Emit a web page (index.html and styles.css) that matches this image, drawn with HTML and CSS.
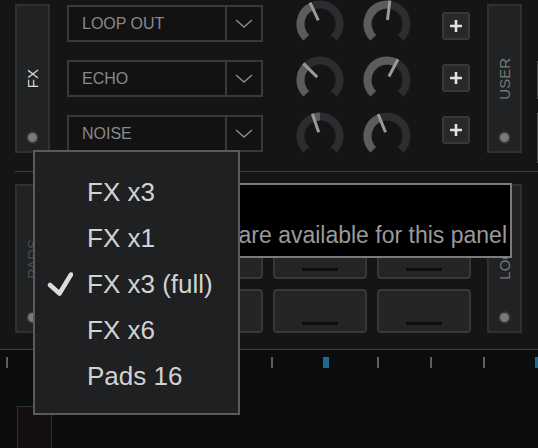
FILE: index.html
```html
<!DOCTYPE html>
<html lang="en">
<head>
    <meta charset="UTF-8">
    <meta name="viewport" content="width=device-width, initial-scale=1.0">
    <title>FX Bank</title>
    <link rel="stylesheet" href="styles.css">
</head>
<body>
    <section class="fx-bank">
        <div class="side active">
            <span class="side-label">FX</span>
            <span class="led"></span>
        </div>

        <div class="combos">
            <div class="combo">
                <span class="combo-text">LOOP OUT</span>
                <span class="combo-arrow"><svg width="18" height="9" viewBox="0 0 18 9"><path d="M1 1 L9 8 L17 1"/></svg></span>
            </div>
            <div class="combo">
                <span class="combo-text">ECHO</span>
                <span class="combo-arrow"><svg width="18" height="9" viewBox="0 0 18 9"><path d="M1 1 L9 8 L17 1"/></svg></span>
            </div>
            <div class="combo">
                <span class="combo-text">NOISE</span>
                <span class="combo-arrow"><svg width="18" height="9" viewBox="0 0 18 9"><path d="M1 1 L9 8 L17 1"/></svg></span>
            </div>
        </div>

        <div class="knobs first">
            <div class="knob" data-value="-25"></div>
            <div class="knob" data-value="-45"></div>
            <div class="knob" data-value="-19" data-origin="0"></div>
        </div>
        <div class="knobs second">
            <div class="knob" data-value="7"></div>
            <div class="knob" data-value="28"></div>
            <div class="knob" data-value="-22"></div>
        </div>

        <div class="adds">
            <button class="add"><svg width="14" height="14" viewBox="0 0 14 14"><path d="M7 1 V13 M1 7 H13"/></svg></button>
            <button class="add"><svg width="14" height="14" viewBox="0 0 14 14"><path d="M7 1 V13 M1 7 H13"/></svg></button>
            <button class="add"><svg width="14" height="14" viewBox="0 0 14 14"><path d="M7 1 V13 M1 7 H13"/></svg></button>
        </div>

        <div class="side user">
            <span class="side-label">USER</span>
            <span class="led"></span>
        </div>

        <div class="next">
            <div class="next-box"></div>
            <div class="next-box tall"></div>
        </div>
    </section>

    <section class="pad-bank">
        <div class="side dim">
            <span class="side-label">PADS</span>
            <span class="led"></span>
        </div>
        <div class="pads">
            <div class="pad"></div><div class="pad"></div><div class="pad"></div><div class="pad"></div>
            <div class="pad"></div><div class="pad"></div><div class="pad"></div><div class="pad"></div>
            <div class="pad"></div><div class="pad"></div><div class="pad"></div><div class="pad"></div>
        </div>
        <div class="side loop">
            <span class="side-label">LOOP</span>
            <span class="led"></span>
        </div>
    </section>

    <section class="timeline">
        <div class="ticks">
            <span class="tick"></span><span class="tick"></span><span class="tick cue"></span>
            <span class="tick"></span><span class="tick"></span><span class="tick"></span>
            <span class="tick cue"></span><span class="tick"></span><span class="tick"></span>
            <span class="tick"></span><span class="tick cue"></span>
        </div>
        <div class="clip"></div>
    </section>

    <div class="notice">No pads are available for this panel</div>

    <ul class="menu">
        <li><span class="menu-text">FX x3</span></li>
        <li><span class="menu-text">FX x1</span></li>
        <li>
            <span class="check"><svg width="26" height="24" viewBox="0 0 26 24"><path d="M3 13 L12.5 21.5 L24 2.5"/></svg></span>
            <span class="menu-text">FX x3 (full)</span>
        </li>
        <li><span class="menu-text">FX x6</span></li>
        <li><span class="menu-text">Pads 16</span></li>
    </ul>

    <script>
        function point(r, deg) {
            const a = deg * Math.PI / 180;
            return (24 + r * Math.sin(a)).toFixed(2) + " " + (24 - r * Math.cos(a)).toFixed(2);
        }

        function arc(from, to) {
            const large = to - from > 180 ? 1 : 0;
            return `M${point(19.5, from)} A19.5 19.5 0 ${large} 1 ${point(19.5, to)}`;
        }

        document.querySelectorAll(".knob").forEach(knob => {
            const value = Number(knob.dataset.value);
            const origin = knob.dataset.origin ? Number(knob.dataset.origin) : -135;
            knob.innerHTML = `<svg width="48" height="48" viewBox="0 0 48 48">
                <path class="knob-track" d="${arc(-135, 135)}"/>
                <path class="knob-fill" d="${arc(Math.min(origin, value), Math.max(origin, value))}"/>
                <path class="knob-needle" d="M${point(4, value)} L${point(23.5, value)}"/>
            </svg>`;
        });
    </script>
</body>
</html>
```

FILE: styles.css
```css
* {
    box-sizing: border-box;
}
body {
    margin: 0;
    width: 538px;
    height: 448px;
    overflow: hidden;
    position: relative;
    background-color: #151515;
    font-family: "Liberation Sans", Arial, sans-serif;
}

/* top bank */
.fx-bank {
    display: flex;
    align-items: flex-start;
    height: 172px;
    margin-left: 15px;
    border-bottom: 1px solid #404040;
}
.fx-bank > * {
    flex-shrink: 0;
}
.fx-bank .side {
    margin-top: 4px;
}

.side {
    display: grid;
    flex-shrink: 0;
    width: 35px;
    height: 149px;
    background-color: #212224;
    border: 2px solid #2f3032;
}
.side-label, .led {
    grid-area: 1 / 1;
    justify-self: center;
}
.side-label {
    align-self: center;
    writing-mode: vertical-rl;
    transform: rotate(180deg);
    font-size: 15px;
    color: #777;
}
.side.active .side-label {
    color: #dadada;
}
.side.dim .side-label {
    color: #4c4c4c;
}
.led {
    align-self: end;
    width: 9px;
    height: 9px;
    margin-bottom: 9px;
    border-radius: 50%;
    background-color: #7a7a7a;
    box-shadow: 0 0 0 2px #333437;
}
.side.user {
    margin-left: 17px;
}

.combos {
    display: flex;
    flex-direction: column;
    gap: 18px;
    margin-left: 17px;
    padding-top: 5px;
}
.combo {
    display: flex;
    width: 196px;
    height: 37px;
    border: 2px solid #393939;
    background-color: #121212;
}
.combo-text {
    flex: 1;
    padding-left: 13px;
    line-height: 33px;
    font-size: 16px;
    color: #898989;
}
.combo-arrow {
    display: flex;
    align-items: center;
    justify-content: center;
    width: 36px;
    border-left: 2px solid #393939;
}
.combo-arrow path {
    fill: none;
    stroke: #8a8a8a;
    stroke-width: 1.5;
}

.knobs {
    display: flex;
    flex-direction: column;
    gap: 8px;
}
.knobs.first {
    margin-left: 33px;
}
.knobs.second {
    margin-left: 19px;
}
.knob {
    width: 48px;
    height: 48px;
}
.knob svg {
    display: block;
}
.knob path {
    fill: none;
    stroke-width: 8;
}
.knob .knob-track {
    stroke: #2c2d31;
}
.knob .knob-fill {
    stroke: #5c5c5e;
}
.knob .knob-needle {
    stroke: #9a9a9a;
    stroke-width: 3;
}

.adds {
    display: flex;
    flex-direction: column;
    gap: 24px;
    margin-left: 31px;
    padding-top: 12px;
}
.add {
    display: flex;
    align-items: center;
    justify-content: center;
    width: 28px;
    height: 28px;
    padding: 0;
    border: 2px solid #38393b;
    border-radius: 3px;
    background-color: #27282a;
}
.add path {
    stroke: #e2e2e2;
    stroke-width: 2.6;
}

.next {
    display: flex;
    flex-direction: column;
    gap: 14px;
    margin-left: 15px;
    padding-top: 61px;
}
.next-box {
    width: 20px;
    height: 38px;
    border: 1px solid #4a4a4a;
}
.next-box.tall {
    height: 50px;
}

/* pads bank */
.pad-bank {
    display: flex;
    align-items: flex-start;
    height: 178px;
    padding: 12px 0 0 15px;
    border-bottom: 1px solid #404040;
}
.pads {
    display: grid;
    grid-template-columns: repeat(4, 94px);
    grid-template-rows: 41px 44px 44px;
    gap: 10px;
    margin-left: 15px;
}
.pad {
    display: flex;
    align-items: flex-end;
    justify-content: center;
    padding-bottom: 6px;
    border: 2px solid #37383a;
    border-radius: 4px;
    background-color: #242527;
}
.pad::after {
    content: "";
    width: 36px;
    height: 3px;
    background-color: #0d0d0d;
}
.side.loop {
    margin-left: 16px;
}

/* timeline */
.timeline {
    height: 98px;
    padding-top: 7px;
    background-color: #0b0c0e;
}
.ticks {
    display: flex;
    height: 11px;
    padding-left: 6px;
}
.tick {
    flex-shrink: 0;
    width: 2px;
    margin-right: 51px;
    background-color: #5f5f5f;
}
.tick.cue {
    width: 6px;
    margin-left: -1px;
    margin-right: 48px;
    background-color: #1b6b8c;
}
.clip {
    width: 35px;
    height: 60px;
    margin: 38px 0 0 17px;
    border: 1px solid #323234;
    background-color: #120e11;
}

/* overlays */
.notice {
    position: absolute;
    left: 60px;
    top: 183px;
    width: 452px;
    height: 75px;
    display: flex;
    align-items: flex-end;
    justify-content: flex-end;
    padding: 0 3px 8px 0;
    border: 2px solid #7b7b7b;
    background-color: #000;
    font-size: 23px;
    line-height: 26px;
    color: #9a9a9a;
    white-space: nowrap;
}

.menu {
    position: absolute;
    left: 33px;
    top: 150px;
    width: 207px;
    height: 265px;
    margin: 0;
    padding: 17px 0 0;
    list-style: none;
    border: 2px solid #5a5a5a;
    background-color: #1f2022;
}
.menu li {
    display: grid;
    grid-template-columns: 52px auto;
    align-items: center;
    height: 46px;
    font-size: 26px;
    color: #d2d2d2;
}
.menu-text {
    grid-column: 2;
}
.check {
    display: flex;
    padding-left: 12px;
}
.check path {
    fill: none;
    stroke: #dcdcdc;
    stroke-width: 4.5;
    stroke-linecap: round;
    stroke-linejoin: round;
}
```
